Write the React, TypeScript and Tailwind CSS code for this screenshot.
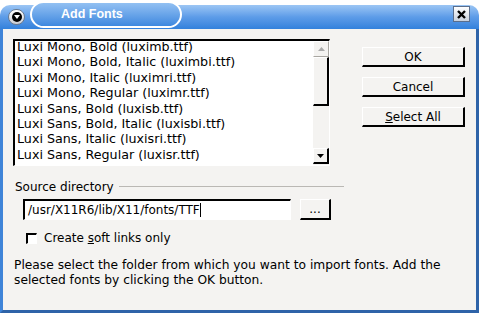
import React from "react";

const items = [
  "Luxi Mono, Bold (luximb.ttf)",
  "Luxi Mono, Bold, Italic (luximbi.ttf)",
  "Luxi Mono, Italic (luximri.ttf)",
  "Luxi Mono, Regular (luximr.ttf)",
  "Luxi Sans, Bold (luxisb.ttf)",
  "Luxi Sans, Bold, Italic (luxisbi.ttf)",
  "Luxi Sans, Italic (luxisri.ttf)",
  "Luxi Sans, Regular (luxisr.ttf)",
  "Luxi Serif, Bold (luxirb.ttf)",
];

function Btn({ children, className = "" }: { children: React.ReactNode; className?: string }) {
  return (
    <div
      className={
        "flex items-center justify-center bg-[#f4f3f1] border-t border-l border-t-white border-l-white border-r-2 border-b-2 border-r-black border-b-black text-[12px] text-black " +
        className
      }
    >
      {children}
    </div>
  );
}

export default function App() {
  return (
    <div
      className="w-[479px] h-[313px] bg-white overflow-hidden relative"
      style={{ fontFamily: '"DejaVu Sans", sans-serif' }}
    >
      {/* title bar */}
      <div className="absolute left-0 top-[5px] w-[479px] h-[24px] rounded-tl-[10px] rounded-tr-[10px] bg-gradient-to-b from-[#9cc6f4] via-[#5d9ce8] to-[#3281dc]" />
      <div className="absolute left-[30px] top-[1px] w-[152px] h-[27px] rounded-full border-2 border-white bg-gradient-to-b from-[#92c0f2] to-[#3d88df] flex items-center pl-[29px]">
        <span
          className="text-white font-bold text-[12.5px] leading-none"
          style={{ fontFamily: '"Liberation Sans", Arial, sans-serif' }}
        >
          Add Fonts
        </span>
      </div>
      <div className="absolute left-[8px] top-[9px] w-[17px] h-[16px] rounded-full bg-gradient-to-b from-white to-[#c8ccd4] border border-[#6a7a90] flex items-center justify-center">
        <div className="w-[10px] h-[10px] rounded-full bg-black flex items-center justify-center">
          <svg width="6" height="4" viewBox="0 0 6 4"><path d="M0 0 H6 L3 4 Z" fill="white" /></svg>
        </div>
      </div>
      <div className="absolute left-[453px] top-[6px] w-[17px] h-[16px] bg-gradient-to-b from-white to-[#c8d0dc] border border-[#5a6e8c] flex items-center justify-center">
        <svg width="9" height="9" viewBox="0 0 9 9">
          <path d="M1 1 L8 8 M8 1 L1 8" stroke="black" strokeWidth="2.4" />
        </svg>
      </div>

      {/* body */}
      <div className="absolute left-0 top-[29px] w-[479px] h-[284px] bg-[#f4f3f1] border-l-[3px] border-r-[3px] border-b-[3px] border-l-[#3f84d8] border-r-[#2e63a8] border-b-[#2e63a8] flex flex-col">
        <div className="flex pl-[10px] pt-[10px]">
          {/* list box */}
          <div className="w-[317px] h-[127px] bg-white border-t-2 border-l-2 border-t-black border-l-black border-b border-r border-b-white border-r-white flex overflow-hidden">
            <div className="flex-1 flex flex-col pl-[2px] mt-[-2px] overflow-hidden">
              {items.map((t) => (
                <div key={t} className="h-[15.4px] leading-[15.4px] text-[12.7px] text-black whitespace-nowrap shrink-0">
                  {t}
                </div>
              ))}
            </div>
            <div className="w-[16px] flex flex-col bg-[#f4f3f1] pb-[1px]">
              <div className="h-[16px] flex items-center justify-center border border-[#ffffff] border-r-[#a9a7a2] border-b-[#a9a7a2] bg-[#f4f3f1]">
                <svg width="7" height="4" viewBox="0 0 7 4"><path d="M0 4 H7 L3.5 0 Z" fill="#aaa" /></svg>
              </div>
              <div className="h-[49px] bg-[#f4f3f1] border-t border-l border-white border-r-2 border-b-2 border-r-black border-b-black" />
              <div className="flex-1" />
              <div className="h-[16px] flex items-center justify-center bg-[#f4f3f1] border-t border-l border-white border-r-2 border-b-2 border-r-black border-b-black">
                <svg width="7" height="4" viewBox="0 0 7 4"><path d="M0 0 H7 L3.5 4 Z" fill="black" /></svg>
              </div>
            </div>
          </div>
          {/* buttons */}
          <div className="flex flex-col gap-[10px] ml-[32px] pt-[8px]">
            <Btn className="w-[103px] h-[20px]">OK</Btn>
            <Btn className="w-[103px] h-[20px]">Cancel</Btn>
            <Btn className="w-[103px] h-[20px]">
              <span><span className="underline">S</span>elect All</span>
            </Btn>
          </div>
        </div>

        {/* source directory */}
        <div className="flex items-center pl-[12px] mt-[12px] w-[341px]">
          <span className="text-[12px] text-black">Source directory</span>
          <div className="flex-1 h-px bg-[#bab8b4] ml-[5px] mt-[-2px]" />
        </div>
        <div className="flex items-center pl-[20px] mt-[3px]">
          <div className="w-[268px] h-[21px] bg-white border-t-2 border-l-2 border-t-black border-l-black border-b border-r border-b-white border-r-white flex items-center pl-[3px]">
            <span className="text-[12px] text-black leading-none">/usr/X11R6/lib/X11/fonts/TTF</span>
            <span className="w-px h-[14px] bg-black" />
          </div>
          <Btn className="w-[31px] h-[21px] ml-[9px]">...</Btn>
        </div>
        <div className="flex items-center pl-[23px] mt-[9px]">
          <div className="w-[11px] h-[11px] bg-white border-t-2 border-l-2 border-t-black border-l-black border-b border-r border-b-white border-r-white" />
          <span className="ml-[7px] text-[12px] text-black">
            Create <span className="underline">s</span>oft links only
          </span>
        </div>
        <div className="pl-[11px] mt-[11px] text-[12.25px] leading-[15px] text-black">
          Please select the folder from which you want to import fonts. Add the
          <br />
          selected fonts by clicking the OK button.
        </div>
      </div>
    </div>
  );
}
